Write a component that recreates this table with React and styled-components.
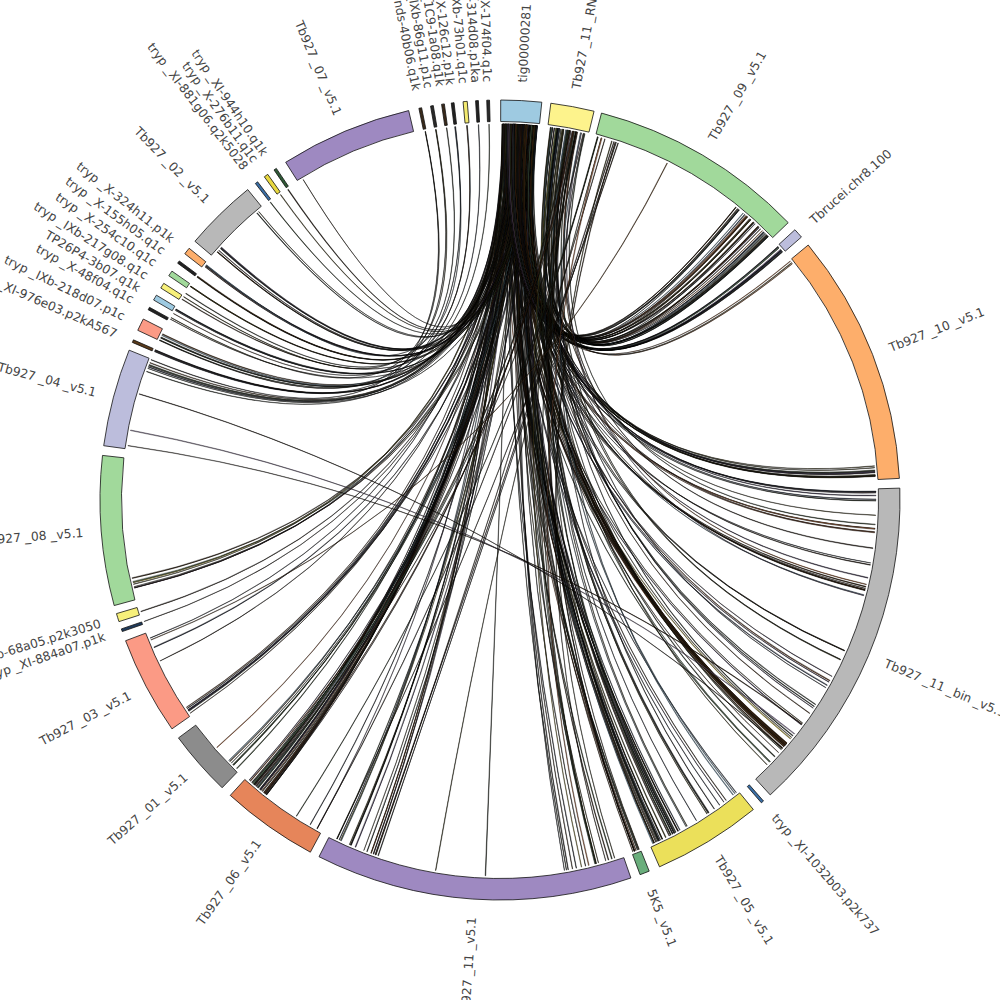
import React from 'react';
import styled, { createGlobalStyle } from 'styled-components';

const GlobalStyle = createGlobalStyle`
  html, body { margin: 0; padding: 0; background: #ffffff; }
  #root { width: 1000px; height: 1000px; }
`;

const Page = styled.div`
  width: 1000px;
  height: 1000px;
  overflow: hidden;
  background: #ffffff;
`;

const Chart = styled.svg`
  display: block;
  width: 1000px;
  height: 1000px;
`;

const Ribbon = styled.path`
  fill: ${p => p.$fill};
  stroke: #000;
  stroke-width: 0.4;
`;

const Segment = styled.path`
  fill: ${p => p.$fill};
  stroke: #111;
  stroke-width: 0.8;
`;

const Label = styled.text`
  font-family: "DejaVu Sans", Verdana, sans-serif;
  font-size: 12.3px;
  fill: #444444;
`;

const CX = 500, CY = 500, R0 = 378.5, R1 = 400, RC = 376, RL = 418;

const P = (r, a) => {
  const t = (a * Math.PI) / 180;
  return [CX + r * Math.sin(t), CY - r * Math.cos(t)];
};
const f = p => `${p[0].toFixed(2)},${p[1].toFixed(2)}`;

function arcPath(a, b) {
  const large = b - a > 180 ? 1 : 0;
  return `M${f(P(R1, a))}A${R1},${R1} 0 ${large} 1 ${f(P(R1, b))}L${f(P(R0, b))}A${R0},${R0} 0 ${large} 0 ${f(P(R0, a))}Z`;
}

function ribbon(s0, s1, t0, t1) {
  return `M${f(P(RC, s0))}L${f(P(RC, s1))}Q${CX},${CY} ${f(P(RC, t0))}L${f(P(RC, t1))}Q${CX},${CY} ${f(P(RC, s0))}Z`;
}

const SEGS = [
  { n: 'tig00000281', a: 0.1, b: 6.0, c: '#9ecae1' },
  { n: 'Tb927 _11 _RNA _v5.1', a: 7.3, b: 13.6, c: '#fdf38c' },
  { n: 'Tb927 _09 _v5.1', a: 14.7, b: 46.1, c: '#a1d99b' },
  { n: 'Tbrucei.chr8.100', a: 47.5, b: 48.9, c: '#bcbddc' },
  { n: 'Tb927 _10 _v5.1', a: 50.4, b: 86.9, c: '#fdae6b' },
  { n: 'Tb927 _11 _bin _v5.1', a: 88.3, b: 137.5, c: '#b8b8b8' },
  { n: 'tryp _XI-1032b03.p2k737', a: 138.8, b: 139.2, c: '#3a6ea5' },
  { n: 'Tb927 _05 _v5.1', a: 140.7, b: 156.5, c: '#ebe05a' },
  { n: '5K5 _v5.1', a: 158.1, b: 159.5, c: '#6aae7c' },
  { n: 'Tb927 _11 _v5.1', a: 160.9, b: 206.9, c: '#9e89c1' },
  { n: 'Tb927 _06 _v5.1', a: 208.3, b: 222.4, c: '#e6855a' },
  { n: 'Tb927 _01 _v5.1', a: 224.0, b: 233.5, c: '#8c8c8c' },
  { n: 'Tb927 _03 _v5.1', a: 235.1, b: 249.4, c: '#fb9a85' },
  { n: 'tryp _XI-884a07.p1k', a: 250.8, b: 251.2, c: '#1f3b5c' },
  { n: 'tryp _IXb-68a05.p2k3050', a: 252.3, b: 253.5, c: '#f7f07a' },
  { n: 'Tb927 _08 _v5.1', a: 254.7, b: 276.4, c: '#a1d99b' },
  { n: 'Tb927 _04 _v5.1', a: 277.8, b: 292.0, c: '#bcbddc' },
  { n: 'tryp _XI-976e03.p2kA567', a: 293.2, b: 293.6, c: '#5a3a1a' },
  { n: 'tryp _IXb-218d07.p1c', a: 295.1, b: 296.9, c: '#fb9a85' },
  { n: 'tryp _X-48f04.q1c', a: 298.4, b: 298.8, c: '#222222' },
  { n: 'TP26P4-3b07.q1k', a: 300.0, b: 300.8, c: '#9ecae1' },
  { n: 'tryp _IXb-217g08.q1c', a: 302.0, b: 302.8, c: '#f7f07a' },
  { n: 'tryp _X-254c10.q1c', a: 304.1, b: 304.9, c: '#a1d99b' },
  { n: 'tryp _X-155h05.q1c', a: 306.3, b: 306.7, c: '#222222' },
  { n: 'tryp _X-324h11.p1k', a: 308.0, b: 309.0, c: '#fdae6b' },
  { n: 'Tb927 _02 _v5.1', a: 310.3, b: 320.9, c: '#b8b8b8' },
  { n: 'tryp _XI-881g06.q2k5028', a: 322.3, b: 322.7, c: '#3a6ea5' },
  { n: 'tryp _X-276b11.q1c', a: 323.9, b: 324.5, c: '#e8d840' },
  { n: 'tryp _XI-944h10.q1k', a: 325.6, b: 326.0, c: '#2f5a36' },
  { n: 'Tb927 _07 _v5.1', a: 327.6, b: 346.8, c: '#9e89c1' },
  { n: 'tryp _islands-40b06.q1k', a: 348.3, b: 348.7, c: '#3a2a1a' },
  { n: 'tryp _IXb-86g11.p1c', a: 350.0, b: 350.4, c: '#2a2a2a' },
  { n: 'tryp _1C9-1a08.q1k', a: 351.6, b: 352.0, c: '#3a2a1a' },
  { n: 'tryp _X-126c12.p1k', a: 353.0, b: 353.4, c: '#222222' },
  { n: 'tryp _IXb-73h01.q1c', a: 354.7, b: 355.3, c: '#f3ea70' },
  { n: 'tryp _X-314d08.p1ka', a: 356.5, b: 356.9, c: '#222222' },
  { n: 'tryp _X-174f04.q1c', a: 358.1, b: 358.5, c: '#2a2a2a' },
];

const DARK = ['#2a1f14', '#3b2a18', '#4b3620', '#5a3b1f', '#2d3527', '#3a4a32', '#283040',
  '#34405a', '#46385e', '#4d4a22', '#5e5426', '#1d2621', '#3e2d2d', '#6b3a1c', '#222222'];
const LIGHT = ['#c96a2c', '#d9c64a', '#8dbad6', '#86b88c', '#b9a0d0', '#e08a5a'];

function buildChords() {
  let seed = 987654321;
  const rnd = () => {
    seed = (seed * 1664525 + 1013904223) >>> 0;
    return seed / 4294967296;
  };
  const pick = arr => arr[Math.floor(rnd() * arr.length)];
  const list = [];
  const add = (s0, s1, t0, t1, n, wmin = 0.04, wmax = 0.13, pal) => {
    for (let i = 0; i < n; i++) {
      const ws = wmin + rnd() * (wmax - wmin);
      const wt = wmin + rnd() * (wmax - wmin);
      const s = s0 + rnd() * Math.max(0, s1 - s0 - ws);
      const t = t0 + rnd() * Math.max(0, t1 - t0 - wt);
      const fill = pal ? pick(pal) : rnd() < 0.14 ? pick(LIGHT) : pick(DARK);
      list.push({ d: ribbon(s, s + ws, t, t + wt), fill });
    }
  };
  const T0 = 0.3, T1 = 5.8;
  // tig -> everywhere
  add(T0, T1, 84.6, 86.7, 10);
  add(T0, T1, 88.6, 90.2, 6);
  add(T0, T1, 94, 96.5, 4);
  add(T0, T1, 99.5, 100.5, 2);
  add(T0, T1, 103, 105, 6);
  add(T0, T1, 113.5, 114.6, 2);
  add(T0, T1, 117.8, 120, 4);
  add(T0, T1, 126.3, 127.1, 2);
  add(T0, T1, 128.8, 129.5, 2);
  add(T0, T1, 130.2, 131.4, 14, 0.08, 0.22, ['#4b3620', '#5a3b1f', '#3b2a18', '#6b3a1c', '#2a1f14']);
  add(T0, T1, 131.8, 134.3, 4);
  add(T0, T1, 140.9, 146, 4);
  add(T0, T1, 150, 156.3, 24);
  add(T0, T1, 158.3, 159.4, 6);
  add(T0, T1, 162, 166, 4);
  add(T0, T1, 166.5, 171, 6);
  add(T0, T1, 181.5, 182.5, 1);
  add(T0, T1, 199, 206.6, 14);
  add(T0, T1, 209, 212, 2);
  add(T0, T1, 218.3, 222.2, 24);
  add(T0, T1, 224.3, 226.2, 6);
  add(T0, T1, 228.8, 229.4, 1);
  add(T0, T1, 235.3, 237.2, 7);
  add(T0, T1, 244, 249, 3);
  add(T0, T1, 250.8, 251.2, 1);
  add(T0, T1, 252.5, 253.3, 1);
  add(T0, T1, 254.9, 258.2, 7);
  add(T0, T1, 289.5, 291.8, 6);
  [293.4, 295.5, 296.3, 298.6, 300.4, 302.4, 304.5, 306.5, 308.5].forEach(a => add(T0, T1, a - 0.2, a + 0.2, 1 + Math.floor(rnd() * 3)));
  add(T0, T1, 310.6, 312.5, 6);
  add(T0, T1, 318.5, 320.5, 2);
  [322.5, 324.2, 325.8].forEach(a => add(T0, T1, a - 0.2, a + 0.2, 1));
  add(T0, T1, 327.9, 329, 1);
  add(1, T1, 38, 46, 24);
  add(7.6, 13.2, 39, 46, 12);
  add(T0, T1, 47.6, 48.8, 12);
  add(T0, T1, 50.5, 51.3, 3);
  // Tb927_11_R -> right / bottom
  add(7.6, 13.2, 92, 105, 6);
  add(7.6, 13.2, 114, 135, 10);
  add(7.6, 13.2, 141, 156, 12, 0.04, 0.13, ['#2a1f14', '#34405a', '#8dbad6', '#3a4a32', '#4d4a22', '#222222']);
  add(7.6, 13.2, 158.2, 159.4, 3);
  add(7.6, 13.2, 165, 172, 4);
  add(7.6, 13.2, 218, 222, 6);
  // Tb927_09 start -> bottom
  add(14.9, 19, 160, 222, 10);
  add(26.2, 26.6, 248, 248.8, 1, 0.06, 0.1, ['#8a5a2a']);
  // top thin segments -> small left segments / Tb927_04 end
  [348.5, 350.2, 351.8, 353.2, 355.0, 356.7, 358.3].forEach(a => {
    add(a - 0.12, a + 0.12, 289, 309, 1 + Math.floor(rnd() * 2), 0.05, 0.1);
  });
  // Tb927_04 -> bottom right
  add(278, 278.6, 126, 140, 1);
  add(280.4, 281, 126, 140, 1);
  add(285.9, 286.5, 126, 140, 1);
  return list;
}

const CHORDS = buildChords();

function labelProps(s) {
  const m = (s.a + s.b) / 2;
  const [x, y] = P(RL, m);
  if (m < 180) {
    return { transform: `translate(${x.toFixed(2)},${y.toFixed(2)}) rotate(${(m - 90).toFixed(2)})`, textAnchor: 'start' };
  }
  return { transform: `translate(${x.toFixed(2)},${y.toFixed(2)}) rotate(${(m + 90).toFixed(2)})`, textAnchor: 'end' };
}

export default function App() {
  return (
    <Page>
      <GlobalStyle />
      <Chart viewBox="0 0 1000 1000">
        <g>
          {CHORDS.map((c, i) => (
            <Ribbon key={i} d={c.d} $fill={c.fill} />
          ))}
        </g>
        <g>
          {SEGS.map(s => (
            <Segment key={s.n} d={arcPath(s.a, s.b)} $fill={s.c} />
          ))}
        </g>
        <g>
          {SEGS.map(s => {
            const lp = labelProps(s);
            return (
              <Label key={s.n} transform={lp.transform} textAnchor={lp.textAnchor} dy="0.36em">
                {s.n}
              </Label>
            );
          })}
        </g>
      </Chart>
    </Page>
  );
}
